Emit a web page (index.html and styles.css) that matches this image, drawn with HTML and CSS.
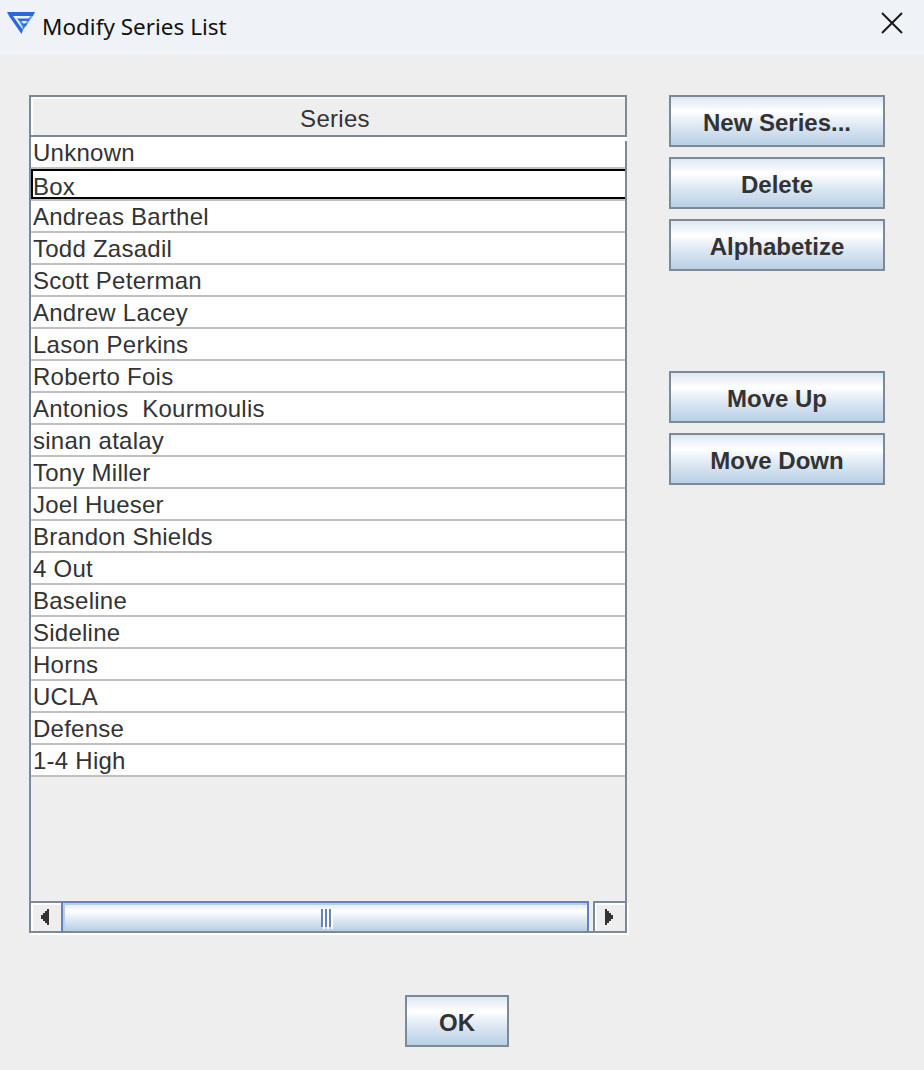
FILE: index.html
```html
<!DOCTYPE html>
<html lang="en">
<head>
    <meta charset="UTF-8">
    <title>Modify Series List</title>
    <link rel="stylesheet" href="styles.css">
</head>
<body>
    <div class="titlebar">
        <svg class="app-logo" width="28" height="22" viewBox="0 0 28 22">
            <path d="M0 0H28L26 4H2Z" fill="#2a68dc"/>
            <path d="M2 4H6L16 18L14.500 22Z" fill="#2a68dc"/>
            <path d="M10 6.500H23L21.500 9H12Z" fill="#2f6fe0"/>
            <path d="M12 9H14.500L18 14.500L16.500 17Z" fill="#4a88ea"/>
            <path d="M15 11.500H20.500L19 14H16.500Z" fill="#2f6fe0"/>
            <path d="M23 4H26L16 18L15 16.500Z" fill="#2a68dc" opacity="0.6"/>
        </svg>
        <span class="title-text">Modify Series List</span>
        <svg class="close-icon" width="22" height="22" viewBox="0 0 22 22">
            <path d="M1 1L21 21M21 1L1 21" stroke="#1a1a1a" stroke-width="2" fill="none"/>
        </svg>
    </div>

    <div class="content">
        <div class="table-panel">
            <div class="table-header">Series</div>
            <ul class="series-list">
                <li>Unknown</li>
                <li class="selected">Box</li>
                <li>Andreas Barthel</li>
                <li>Todd Zasadil</li>
                <li>Scott Peterman</li>
                <li>Andrew Lacey</li>
                <li>Lason Perkins</li>
                <li>Roberto Fois</li>
                <li>Antonios&nbsp; Kourmoulis</li>
                <li>sinan atalay</li>
                <li>Tony Miller</li>
                <li>Joel Hueser</li>
                <li>Brandon Shields</li>
                <li>4 Out</li>
                <li>Baseline</li>
                <li>Sideline</li>
                <li>Horns</li>
                <li>UCLA</li>
                <li>Defense</li>
                <li>1-4 High</li>
            </ul>
            <div class="scrollbar">
                <div class="scroll-btn scroll-left">
                    <svg width="8" height="16" viewBox="0 0 8 16" shape-rendering="crispEdges">
                        <path d="M8 0V16H6V14H4V12H2V10H0V6H2V4H4V2H6V0Z" fill="#333"/>
                    </svg>
                </div>
                <div class="scroll-thumb">
                    <div class="grip"><span></span><span></span><span></span></div>
                </div>
                <div class="scroll-btn scroll-right">
                    <svg width="8" height="16" viewBox="0 0 8 16" shape-rendering="crispEdges">
                        <path d="M0 0V16H2V14H4V12H6V10H8V6H6V4H4V2H2V0Z" fill="#333"/>
                    </svg>
                </div>
            </div>
        </div>

        <div class="side-buttons">
            <div class="button-group">
                <button class="btn">New Series...</button>
                <button class="btn">Delete</button>
                <button class="btn">Alphabetize</button>
            </div>
            <div class="button-group">
                <button class="btn">Move Up</button>
                <button class="btn">Move Down</button>
            </div>
        </div>
    </div>

    <div class="footer">
        <button class="btn ok-btn">OK</button>
    </div>
</body>
</html>
```

FILE: styles.css
```css
body {
    margin: 0;
    height: 1070px;
    overflow: hidden;
    background: #eeeeee;
    font-family: "Liberation Sans", Arial, sans-serif;
    color: #333333;
}

.titlebar {
    height: 55px;
    background: #eff3f8;
    display: flex;
    align-items: center;
    padding: 0 21px 0 7px;
}

.app-logo {
    margin: -9px 7px 0 0;
}

.title-text {
    font-family: "Noto Sans", sans-serif;
    font-size: 22.5px;
    color: #111;
    margin-top: -3px;
}

.close-icon {
    margin-left: auto;
    margin-top: -9px;
}

.content {
    display: flex;
    gap: 42px;
    padding: 40px 0 0 29px;
}

/* table */
.table-panel {
    width: 594px;
    height: 834px;
    border: 2px solid #7a8a99;
    display: flex;
    flex-direction: column;
}

.table-header {
    height: 36px;
    line-height: 39px;
    font-size: 24px;
    letter-spacing: 0.3px;
    text-align: center;
    padding-left: 14px;
    border-top: 2px solid #fff;
    border-bottom: 2px solid #7a8a99;
    box-shadow: inset 2px 0 0 #fff;
}

.series-list {
    list-style: none;
    margin: 0;
    padding: 0;
    flex: 1;
    position: relative;
}

/* small notch in the right border under the header */
.series-list::before {
    content: "";
    position: absolute;
    top: 0;
    right: -2px;
    width: 2px;
    height: 4px;
    background: #fff;
}

.series-list li {
    height: 30px;
    line-height: 31px;
    padding-left: 2px;
    font-size: 24px;
    letter-spacing: 0.25px;
    background: #fff;
    border-bottom: 2px solid #c0c0c0;
}

.series-list li.selected {
    height: 26px;
    line-height: 31px;
    padding-left: 0;
    border: 2px solid #000;
    border-right: none;
    box-shadow: 0 2px 0 #c0c0c0;
    margin-bottom: 2px;
}

/* scrollbar */
.scrollbar {
    height: 30px;
    display: flex;
    background: #eee;
    position: relative;
}

/* white edge outside the panel border */
.scrollbar::after {
    content: "";
    position: absolute;
    top: 2px;
    left: 0;
    right: -4px;
    bottom: -4px;
    border-right: 2px solid #fff;
    border-bottom: 2px solid #fff;
}

.scroll-btn {
    display: flex;
    align-items: center;
    justify-content: center;
    box-sizing: border-box;
    border-top: 2px solid #7a8a99;
    box-shadow: inset 0 2px 0 #fff, inset 2px 0 0 #fff;
}

.scroll-btn svg {
    margin-right: 2px;
}

.scroll-left {
    width: 30px;
}

.scroll-right {
    width: 32px;
    margin-left: 4px;
    border-left: 2px solid #7a8a99;
}

.scroll-thumb {
    width: 528px;
    box-sizing: border-box;
    border: 2px solid #6382bf;
    border-bottom: none;
    background: linear-gradient(#dde8f3 0%, #fff 30%, #dde8f3 60%, #b8cfe5 100%);
    box-shadow: inset 2px 2px 0 #b8cfe5;
    display: flex;
    justify-content: center;
}

.grip {
    display: flex;
    gap: 2px;
    margin: 6px 0 0 0;
    padding-left: 2px;
}

.grip span {
    width: 2px;
    height: 18px;
    background: #6382bf;
    box-shadow: 2px 2px 0 #fff;
}

/* buttons */
.side-buttons {
    display: flex;
    flex-direction: column;
    gap: 100px;
}

.button-group {
    display: flex;
    flex-direction: column;
    gap: 10px;
}

.btn {
    width: 216px;
    height: 52px;
    padding: 4px 0 0;
    border: 2px solid #7a8a99;
    border-radius: 0;
    background: linear-gradient(#dde8f3 0%, #fff 30%, #dde8f3 60%, #b8cfe5 100%);
    font-family: "Liberation Sans", Arial, sans-serif;
    font-size: 24px;
    font-weight: bold;
    color: #333333;
    cursor: pointer;
}

.footer {
    display: flex;
    justify-content: center;
    padding: 62px 10px 0 0;
}

.ok-btn {
    width: 104px;
}
```
